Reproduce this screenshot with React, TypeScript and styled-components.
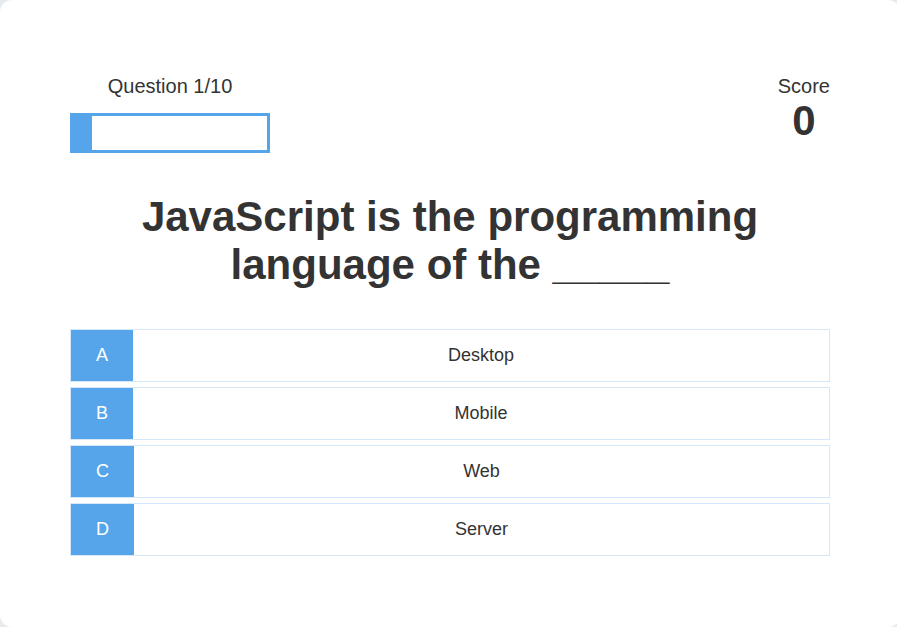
import React from "react";
import styled, { createGlobalStyle } from "styled-components";

const GlobalStyle = createGlobalStyle`
  * { box-sizing: border-box; margin: 0; padding: 0; }
  html, body { background: #e6ebf0; overflow: hidden; }
  body { font-family: "Liberation Sans", Arial, Helvetica, sans-serif; color: #333; }
`;

const Card = styled.div`
  width: 900px;
  min-height: 100vh;
  background: #fff;
  border-radius: 12px;
`;

const Game = styled.div`
  width: 760px;
  margin: 0 auto;
  padding-top: 75px;
  display: flex;
  flex-direction: column;
`;

const Hud = styled.div`
  display: flex;
  justify-content: space-between;
  margin-bottom: 40px;
`;

const HudItem = styled.div`
  display: flex;
  flex-direction: column;
  align-items: center;
`;

const HudPrefix = styled.p`
  font-size: 20px;
  text-align: center;
  color: #333;
`;

const HudMain = styled.h1`
  font-size: 42px;
  line-height: 46px;
  font-weight: 700;
  text-align: center;
  color: #333;
`;

const ProgressBar = styled.div`
  width: 200px;
  height: 40px;
  border: 3px solid #56a5eb;
  margin-top: 15px;
`;

const ProgressFill = styled.div`
  height: 34px;
  background: #56a5eb;
`;

const Question = styled.h2`
  font-size: 42px;
  font-weight: 700;
  text-align: center;
  color: #333;
  margin-bottom: 40px;
`;

const Choice = styled.div`
  display: flex;
  width: 100%;
  margin-bottom: 5px;
  font-size: 18px;
  border: 1px solid rgba(86, 165, 235, 0.25);
  background: #fff;
`;

const ChoicePrefix = styled.p`
  padding: 15px 25px;
  background: #56a5eb;
  color: #fff;
`;

const ChoiceText = styled.p`
  padding: 15px;
  flex: 1;
  text-align: center;
  color: #333;
`;

const choices = [
  ["A", "Desktop"],
  ["B", "Mobile"],
  ["C", "Web"],
  ["D", "Server"],
];

export default function App() {
  const progress = 1 / 10;
  return (
    <>
      <GlobalStyle />
      <Card>
        <Game>
          <Hud>
            <HudItem>
              <HudPrefix>Question 1/10</HudPrefix>
              <ProgressBar>
                <ProgressFill style={{ width: `${progress * 100}%` }} />
              </ProgressBar>
            </HudItem>
            <HudItem>
              <HudPrefix>Score</HudPrefix>
              <HudMain>0</HudMain>
            </HudItem>
          </Hud>
          <Question>
            JavaScript is the programming
            <br />
            language of the _____
          </Question>
          {choices.map(([p, t]) => (
            <Choice key={p}>
              <ChoicePrefix>{p}</ChoicePrefix>
              <ChoiceText>{t}</ChoiceText>
            </Choice>
          ))}
        </Game>
      </Card>
    </>
  );
}
